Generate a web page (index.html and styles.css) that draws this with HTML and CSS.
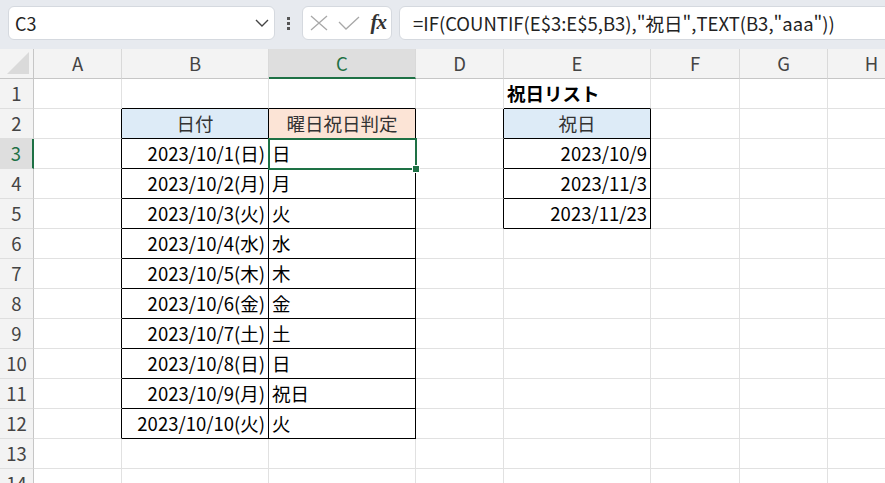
FILE: index.html
```html
<!DOCTYPE html>
<html lang="ja">
<head>
    <meta charset="UTF-8">
    <title>祝日判定</title>
    <link rel="stylesheet" href="styles.css">
</head>
<body>
    <!-- Formelleiste -->
    <div class="topbar">
        <div class="namebox">
            <span class="name">C3</span>
            <svg class="chev" width="14" height="8" viewBox="0 0 14 8"><path d="M1 1 L7 7 L13 1" fill="none" stroke="#444" stroke-width="1.4"/></svg>
        </div>
        <div class="dots"><span></span><span></span><span></span></div>
        <div class="fxbox">
            <svg width="18" height="16" viewBox="0 0 18 16"><path d="M1 1 L17 15 M17 1 L1 15" stroke="#a8a8a8" stroke-width="1.3" fill="none"/></svg>
            <svg width="22" height="14" viewBox="0 0 22 14"><path d="M1 6 L8 13 L21 1" stroke="#a8a8a8" stroke-width="1.3" fill="none"/></svg>
            <span class="fx">fx</span>
        </div>
        <div class="formula">=IF(COUNTIF(E$3:E$5,B3),"祝日",TEXT(B3,"aaa"))</div>
    </div>

    <!-- Tabelle -->
    <div class="sheet" id="sheet"></div>

    <script>
        const cols = ["A", "B", "C", "D", "E", "F", "G", "H"];
        const days = ["日", "月", "火", "水", "木", "金", "土", "日", "月", "火"];
        const data = {
            "B2": ["日付", "head blue"],
            "C2": ["曜日祝日判定", "head orange"],
            "E1": ["祝日リスト", "bold"],
            "E2": ["祝日", "head blue"],
            "E3": ["2023/10/9", "num"],
            "E4": ["2023/11/3", "num"],
            "E5": ["2023/11/23", "num"]
        };
        for (let i = 0; i < 10; i++) {
            data["B" + (i + 3)] = [`2023/10/${i + 1}(${days[i]})`, "num"];
            data["C" + (i + 3)] = [i === 8 ? "祝日" : days[i], "txt"];
        }

        // Rahmen der beiden Tabellen
        function inBox(c, r) {
            return ((c === "B" || c === "C") && r >= 2 && r <= 12) || (c === "E" && r >= 2 && r <= 5);
        }

        const sheet = document.getElementById("sheet");
        const corner = document.createElement("div");
        corner.className = "hd corner";
        sheet.appendChild(corner);
        cols.forEach(c => {
            const d = document.createElement("div");
            d.className = "hd col" + (c === "C" ? " sel" : "");
            d.textContent = c;
            sheet.appendChild(d);
        });

        for (let r = 1; r <= 14; r++) {
            const rh = document.createElement("div");
            rh.className = "hd row" + (r === 3 ? " sel" : "");
            rh.textContent = r;
            sheet.appendChild(rh);
            cols.forEach((c, i) => {
                const d = document.createElement("div");
                d.className = "cell";
                const next = cols[i + 1];
                if (inBox(c, r)) d.classList.add("box");
                if (next && inBox(next, r)) d.classList.add("edge-r");
                if (inBox(c, r + 1)) d.classList.add("edge-b");
                const v = data[c + r];
                if (v) {
                    d.textContent = v[0];
                    v[1].split(" ").forEach(k => d.classList.add(k));
                }
                if (c + r === "C3") d.classList.add("active");
                sheet.appendChild(d);
            });
        }
    </script>
</body>
</html>
```

FILE: styles.css
```css
body {
    margin: 0;
    width: 885px;
    height: 483px;
    overflow: hidden;
    background-color: #fff;
    font-family: "Noto Sans CJK JP", "Liberation Sans", sans-serif;
    color: #000;
}
.topbar {
    height: 49px;
    background-color: #e7eaef;
    display: flex;
    align-items: flex-start;
    padding-top: 6px;
    box-sizing: border-box;
}
.namebox, .fxbox, .formula {
    height: 34px;
    background-color: #fff;
    border: 1px solid #d5d9df;
    border-radius: 6px;
    box-sizing: border-box;
    display: flex;
    align-items: center;
}
.namebox {
    margin-left: 8px;
    width: 267px;
    padding: 0 5px 0 6px;
    justify-content: space-between;
}
.name {
    font-size: 18px;
    color: #222;
}
.dots {
    width: 27px;
    display: flex;
    flex-direction: column;
    align-items: center;
    gap: 2px;
    padding-top: 11px;
}
.dots span {
    width: 3px;
    height: 3px;
    background-color: #555;
}
.fxbox {
    width: 90px;
    padding: 0 5px 0 7px;
    justify-content: space-between;
}
.fx {
    font-family: "Liberation Serif", serif;
    font-style: italic;
    font-weight: bold;
    font-size: 21px;
    color: #333;
    letter-spacing: -1px;
    margin-top: -2px;
}
.formula {
    margin-left: 7px;
    flex: 1;
    margin-right: -10px;
    padding-left: 13px;
    font-size: 18.5px;
    color: #222;
    white-space: nowrap;
}
.sheet {
    display: grid;
    grid-template-columns: 34px 88px 147px 147px 88px 147px 89px 88px 88px;
    grid-auto-rows: 30px;
}
.hd, .cell {
    box-sizing: border-box;
    border-right: 1px solid #e1e1e1;
    border-bottom: 1px solid #e1e1e1;
    font-size: 18.5px;
    line-height: 29px;
    white-space: nowrap;
    overflow: visible;
}
.hd {
    background-color: #f3f3f3;
    color: #444;
    text-align: center;
    border-color: #d9d9d9;
}
.hd.row {
    border-right-color: #c6c6c6;
    border-bottom-color: #dedede;
}
.hd.col {
    border-bottom-color: #c6c6c6;
}
.corner {
    position: relative;
    border-right-color: #c6c6c6;
    border-bottom-color: #c6c6c6;
}
.corner::after {
    content: "";
    position: absolute;
    right: 4px;
    bottom: 4px;
    border-left: 22px solid transparent;
    border-bottom: 22px solid #dadada;
}
.hd.sel {
    background-color: #dedede;
    color: #1e7145;
}
.hd.col.sel {
    border-bottom: 2px solid #1e7145;
    line-height: 28px;
}
.hd.row.sel {
    border-right: 2px solid #1e7145;
}
.cell.box, .cell.edge-r {
    border-right-color: #000;
}
.cell.box, .cell.edge-b {
    border-bottom-color: #000;
}
.cell.num {
    text-align: right;
    padding-right: 3px;
}
.cell.txt {
    padding-left: 3px;
}
.cell.head {
    text-align: center;
    color: #333;
}
.cell.blue {
    background-color: #ddebf7;
}
.cell.orange {
    background-color: #fce4d6;
}
.cell.bold {
    font-weight: bold;
    padding-left: 3px;
}
.cell.active {
    position: relative;
}
.cell.active::before {
    content: "";
    position: absolute;
    left: -1px;
    top: -1px;
    right: -2px;
    bottom: -2px;
    border: 2px solid #1e7145;
}
.cell.active::after {
    content: "";
    position: absolute;
    right: -5px;
    bottom: -5px;
    width: 6px;
    height: 6px;
    background-color: #1e7145;
    border: 1px solid #fff;
}
```
